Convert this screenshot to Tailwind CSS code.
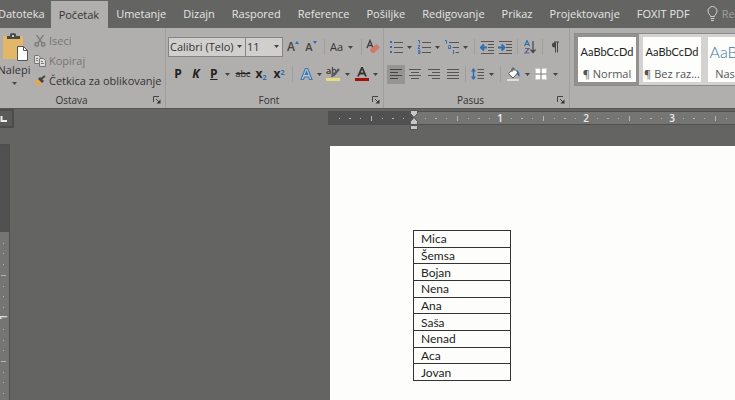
<!DOCTYPE html>
<html lang="sr-Latn">
<head>
  <meta charset="utf-8">
  <meta name="viewport" content="width=device-width, initial-scale=1">
  <title>Dokument</title>
  <script src="https://cdn.jsdelivr.net/npm/@tailwindcss/browser@4"></script>
</head>
<body class="flex flex-col h-screen overflow-hidden bg-[#646462] font-['Open_Sans','Noto_Sans',sans-serif] text-[11px] leading-4 text-[#333]">

  <!-- shared icons -->
  <svg class="hidden">
    <symbol id="arrow" viewBox="0 0 5 3"><path d="M0 0h5L2.500 3z" fill="#444"/></symbol>
    <symbol id="launcher" viewBox="0 0 8 8"><path d="M.5 6V.5H6" fill="none" stroke="#444"/><path d="M3 3l3 3" stroke="#444"/><path d="M7.500 3.500v4h-4z" fill="#333"/></symbol>
  </svg>

  <!-- tabs -->
  <nav class="flex shrink-0 h-7 overflow-hidden whitespace-nowrap text-[#e6e6e6] [&>a]:shrink-0 [&>a]:pl-2 [&>a]:pt-[6px]">
    <a href="#" class="-ml-[10px] pr-[6px]">Datoteka</a>
    <a href="#" class="bg-[#b1afae] text-[#333] mt-px pr-[9px]">Početak</a>
    <a href="#" class="pr-[9px]">Umetanje</a>
    <a href="#" class="pr-[9px]">Dizajn</a>
    <a href="#" class="pr-[9px]">Raspored</a>
    <a href="#" class="pr-[9px]">Reference</a>
    <a href="#" class="pr-[9px]">Pošiljke</a>
    <a href="#" class="pr-[9px]">Redigovanje</a>
    <a href="#" class="pr-[9px]">Prikaz</a>
    <a href="#" class="pr-[9px]">Projektovanje</a>
    <a href="#" class="pr-[9px]">FOXIT PDF</a>
    <a href="#" class="flex gap-1 text-[#a0a09e]">
      <svg class="w-[11px] h-4" viewBox="0 0 11 16" fill="none" stroke="#d0d0ce"><path d="M3.500 10.500c0-2-2.500-2.500-2.500-5.500a4.500 4.500 0 0 1 9 0c0 3-2.500 3.500-2.500 5.500zM3.500 12.500h4M4 14.500h3"/></svg>
      Reci mi
    </a>
  </nav>

  <!-- ribbon -->
  <header class="flex shrink-0 h-[81px] bg-[#b1afae] border-b border-[#555]">

    <section class="flex flex-col w-[166px] shrink-0 border-r border-[#a09e9d] whitespace-nowrap">
      <div class="flex h-[65px]">
        <button class="flex flex-col items-center w-[30px] shrink-0 pt-[5px] -ml-px">
          <svg class="w-7 h-7 shrink-0" viewBox="0 0 28 28">
            <path d="M3 3h20v23H3z" fill="#e3b768"/>
            <path d="M7 6V3h3V1.500Q10 0 13 0t3 1.500V3h4v3z" fill="#4a4a4a"/><path d="M12 2h2v2h-2z" fill="#c8c6c5"/>
            <path d="M17.500 13.500h6l4 4v10h-10z" fill="#fff" stroke="#555"/><path d="M23.500 13.500v4h4" fill="none" stroke="#555"/>
          </svg>
          <span class="mt-px">Nalepi</span>
          <svg class="w-[5px] h-[3px] mt-1"><use href="#arrow"/></svg>
        </button>
        <div class="flex flex-col pt-[3px] pl-[5px] [&>button]:flex [&>button]:items-center [&>button]:gap-[3px] [&>button]:h-5">
          <button class="text-[#757575]">
            <svg class="w-3 h-3" viewBox="0 0 12 12" fill="none" stroke="#777" stroke-width="1.300"><path d="M2.500 0l5.500 8M9.500 0L4 8"/><circle cx="2.800" cy="9.500" r="1.800"/><circle cx="9.200" cy="9.500" r="1.800"/></svg>
            Iseci
          </button>
          <button class="text-[#757575]">
            <svg class="w-3 h-3" viewBox="0 0 12 12" fill="#ddd" stroke="#777"><path d="M.5.5h4l2 2v6h-6z"/><path d="M5.500 3.500h4l2 2v6h-6z"/><path d="M2 3.500h2M2 5.500h2M7 6.500h2M7 8.500h3"/></svg>
            Kopiraj
          </button>
          <button>
            <svg class="w-3 h-3" viewBox="0 0 12 12"><path d="M0 6l4-2 4 4-3 4z" fill="#e3a855"/><path d="M4 4l2-2 4 4-2 2z" fill="#444"/><path d="M7 4l4-3" stroke="#444" stroke-width="2"/></svg>
            Četkica za oblikovanje
          </button>
        </div>
      </div>
      <div class="flex items-center pr-1 text-[10px] leading-4">
        <span class="flex-1 pr-[10px] text-center">Ostava</span>
        <button aria-label="Ostava opcije"><svg class="w-2 h-2"><use href="#launcher"/></svg></button>
      </div>
    </section>

    <section class="flex flex-col w-[218px] shrink-0 border-r border-[#a09e9d] whitespace-nowrap">
      <div class="flex flex-col h-[65px] pl-[2px] pt-[9px] gap-[7px]">
        <div class="flex items-center h-5">
          <label class="relative w-[78px] h-5">
            <select aria-label="Font" class="appearance-none w-full h-full pl-px border border-[#858585] bg-[#d0cfce]"><option>Calibri (Telo)</option></select>
            <svg class="absolute right-1 top-2 w-[5px] h-[3px]"><use href="#arrow"/></svg>
          </label>
          <label class="relative w-[38px] h-5 -ml-px">
            <select aria-label="Veličina fonta" class="appearance-none w-full h-full pl-px border border-[#858585] bg-[#d0cfce]"><option>11</option></select>
            <svg class="absolute right-1 top-2 w-[5px] h-[3px]"><use href="#arrow"/></svg>
          </label>
          <button class="flex justify-center w-[18px] text-xs font-semibold text-[#444] ml-px" aria-label="Povećaj font">A<svg class="w-1 h-[3px] mt-[2px]" viewBox="0 0 4 3"><path d="M0 3h4L2 0z" fill="#2f6db0"/></svg></button>
          <button class="flex justify-center w-[18px] text-[11px] font-semibold text-[#444]" aria-label="Smanji font">A<svg class="w-1 h-[3px] mt-[2px]" viewBox="0 0 4 3"><path d="M0 0h4L2 3z" fill="#2f6db0"/></svg></button>
          <i class="w-px h-4 mx-1 bg-[#a09e9d]"></i>
          <button class="flex items-center gap-[5px] w-7 pl-px">Aa<svg class="w-[5px] h-[3px] shrink-0"><use href="#arrow"/></svg></button>
          <i class="w-px h-4 mx-1 bg-[#a09e9d]"></i>
          <button aria-label="Obriši oblikovanje"><svg class="w-[15px] h-4" viewBox="0 0 15 16"><path d="M1 9L4 1.500 7 9M2 6.500h4" fill="none" stroke="#444" stroke-width="1.400"/><path d="M4 10.500l6.500-5.500 3.500 3.500-6 5.500H6l-2-2z" fill="#d0796b"/></svg></button>
        </div>
        <div class="flex items-center h-5 pl-px text-xs text-[#222]">
          <button class="w-[18px] font-bold">P</button>
          <button class="w-[18px] font-bold italic">K</button>
          <button class="flex items-center gap-[7px] w-[29px] pl-[5px]"><b class="underline">P</b><svg class="w-[5px] h-[3px]"><use href="#arrow"/></svg></button>
          <button class="w-[18px] text-[9px] line-through">abc</button>
          <button class="w-[18px] font-bold">x<sub class="text-[7px] text-[#2f6db0]">2</sub></button>
          <button class="w-[18px] font-bold">x<sup class="text-[7px] text-[#2f6db0]">2</sup></button>
          <i class="w-px h-4 mx-1 bg-[#a09e9d]"></i>
          <button class="flex items-center gap-1 w-7 pl-[3px]" aria-label="Efekti teksta">
            <svg class="w-[13px] h-[14px]" viewBox="0 0 13 14"><path d="M1 12.500L5.300 1.500h2.400L12 12.500H9.500L8.500 10h-4l-1 2.500zM5.300 7.500h2.400L6.500 4.500z" fill="#b9c6d3" stroke="#3f78b3" stroke-width="1.100"/></svg>
            <svg class="w-[5px] h-[3px]"><use href="#arrow"/></svg>
          </button>
          <button class="flex items-center gap-1 w-7" aria-label="Boja isticanja">
            <svg class="w-4 h-[14px]" viewBox="0 0 16 14"><text x="1" y="7" font-size="9" font-weight="600" fill="#333">ab</text><path d="M14 2L9 8" stroke="#555" stroke-width="2"/><path d="M6 10l1-4 3 3z" fill="#555"/><path d="M1 11h14v3H1z" fill="#ecdb7c"/></svg>
            <svg class="w-[5px] h-[3px]"><use href="#arrow"/></svg>
          </button>
          <button class="flex items-center gap-1 w-7 pl-[2px]" aria-label="Boja fonta">
            <svg class="w-[14px] h-[14px]" viewBox="0 0 14 14"><path d="M3 9.500L7 .5l4 9M4.500 6.500h5" fill="none" stroke="#333" stroke-width="1.800"/><path d="M0 11h14v3H0z" fill="#a31208"/></svg>
            <svg class="w-[5px] h-[3px]"><use href="#arrow"/></svg>
          </button>
        </div>
      </div>
      <div class="flex items-center pr-[3px] text-[10px] leading-4">
        <span class="flex-1 text-center">Font</span>
        <button aria-label="Font opcije"><svg class="w-2 h-2"><use href="#launcher"/></svg></button>
      </div>
    </section>

    <section class="flex flex-col w-[186px] shrink-0 border-r border-[#a09e9d] whitespace-nowrap">
      <div class="flex flex-col h-[65px] pl-[3px] pt-[9px] gap-[7px]">
        <div class="flex items-center h-5">
          <button class="flex items-center gap-1 w-7 pl-[2px]" aria-label="Znakovi za nabrajanje">
            <svg class="w-[14px] h-[14px]" viewBox="0 0 14 14"><path d="M1 1h2v2H1zM1 6h2v2H1zM1 11h2v2H1z" fill="#2f6db0"/><path d="M5 2.500h9M5 7.500h9M5 12.500h9" stroke="#555"/></svg>
            <svg class="w-[5px] h-[3px]"><use href="#arrow"/></svg>
          </button>
          <button class="flex items-center gap-1 w-7 pl-[2px]" aria-label="Numerisanje">
            <svg class="w-[14px] h-[14px]" viewBox="0 0 14 14"><path d="M1 .5h1.500v3M1 5.500h2l-2 3h2M1 10.500h2v3H1M1 12h2" fill="none" stroke="#2f6db0"/><path d="M5 2.500h9M5 7.500h9M5 12.500h9" stroke="#555"/></svg>
            <svg class="w-[5px] h-[3px]"><use href="#arrow"/></svg>
          </button>
          <button class="flex items-center gap-1 w-7 pl-[2px]" aria-label="Lista na više nivoa">
            <svg class="w-[14px] h-[14px]" viewBox="0 0 14 14"><path d="M0 .5h1.500v3M3.500 5.500h2v3h-2v-2M8.500 10v4" fill="none" stroke="#2f6db0"/><path d="M4 2.500h10M7.500 7.500H14M10.500 12.500H14" stroke="#555"/></svg>
            <svg class="w-[5px] h-[3px]"><use href="#arrow"/></svg>
          </button>
          <i class="w-px h-4 mx-[3px] bg-[#a09e9d]"></i>
          <button class="flex justify-center w-[18px]" aria-label="Smanji uvlačenje"><svg class="w-[14px] h-[13px]" viewBox="0 0 14 13"><path d="M1 .5h13M8 3.500h6M8 6.500h6M8 9.500h6M1 12.500h13" stroke="#555"/><path d="M7 6.500H2M4 3.500l-3 3 3 3" fill="none" stroke="#2f6db0" stroke-width="2"/></svg></button>
          <button class="flex justify-center w-[18px]" aria-label="Povećaj uvlačenje"><svg class="w-[14px] h-[13px]" viewBox="0 0 14 13"><path d="M1 .5h13M8 3.500h6M8 6.500h6M8 9.500h6M1 12.500h13" stroke="#555"/><path d="M0 6.500h5M3.500 3.500l3 3-3 3" fill="none" stroke="#2f6db0" stroke-width="2"/></svg></button>
          <i class="w-px h-4 mx-[3px] bg-[#a09e9d]"></i>
          <button class="flex justify-center w-[18px]" aria-label="Sortiraj"><svg class="w-3 h-[14px]" viewBox="0 0 12 14" fill="none"><path d="M.5 6L3 .5 5.500 6M1.500 4.500h3" stroke="#2f6db0" stroke-width="1.200"/><path d="M1 8.500h4l-4 4.500h4.500" stroke="#6b5b95" stroke-width="1.200"/><path d="M9 1v11M6.500 9.500L9 12.500l2.500-3" stroke="#444" stroke-width="1.200"/></svg></button>
          <i class="w-px h-4 mx-[3px] bg-[#a09e9d]"></i>
          <button class="flex justify-center w-[18px]" aria-label="Prikaži znakove"><svg class="w-2 h-3" viewBox="0 0 8 12"><path d="M4 1.500H3.500a2.500 2.500 0 0 0 0 5H4z" fill="#444"/><path d="M3 1h5M4.500 1v10.500M6.500 1v10.500" stroke="#444"/></svg></button>
        </div>
        <div class="flex items-center h-5">
          <div class="flex gap-px [&>button]:flex [&>button]:justify-center [&>button]:items-center [&>button]:w-[18px] [&>button]:h-[19px]">
            <button class="bg-[#979594]" aria-label="Poravnaj levo"><svg class="w-3 h-[10px]" viewBox="0 0 12 10" stroke="#444"><path d="M0 .5h12M0 3.500h8M0 6.500h12M0 9.500h8"/></svg></button>
            <button aria-label="Centriraj"><svg class="w-3 h-[10px]" viewBox="0 0 12 10" stroke="#555"><path d="M0 .5h12M2 3.500h8M0 6.500h12M2 9.500h8"/></svg></button>
            <button aria-label="Poravnaj desno"><svg class="w-3 h-[10px]" viewBox="0 0 12 10" stroke="#555"><path d="M0 .5h12M4 3.500h8M0 6.500h12M4 9.500h8"/></svg></button>
            <button aria-label="Obostrano"><svg class="w-3 h-[10px]" viewBox="0 0 12 10" stroke="#555"><path d="M0 .5h12M0 3.500h12M0 6.500h12M0 9.500h12"/></svg></button>
          </div>
          <i class="w-px h-4 mx-[3px] bg-[#a09e9d]"></i>
          <button class="flex items-center gap-1 w-7 pl-[2px]" aria-label="Prored">
            <svg class="w-[14px] h-[14px]" viewBox="0 0 14 14"><path d="M2.500 2v10" stroke="#2f6db0" stroke-width="1.500"/><path d="M0 4.500L2.500 1 5 4.500zM0 9.500L2.500 13 5 9.500z" fill="#2f6db0"/><path d="M6.500 2.500H13M6.500 5.500H13M6.500 8.500H13M6.500 11.500H13" stroke="#555"/></svg>
            <svg class="w-[5px] h-[3px]"><use href="#arrow"/></svg>
          </button>
          <i class="w-px h-4 mx-[3px] bg-[#a09e9d]"></i>
          <button class="flex items-center gap-[5px] w-7 pl-[2px]" aria-label="Senčenje">
            <svg class="w-[14px] h-[14px]" viewBox="0 0 14 14"><path d="M2.500 6.500L8 1.500l4 4-5 5.500z" fill="#fff" stroke="#555"/><path d="M6 5V1.500q1-1.500 2 0V4" fill="none" stroke="#555"/><path d="M11 3q3 2 2.500 7L11 7z" fill="#2f6db0"/><path d="M1 12h12v2H1z" fill="#dedddc"/></svg>
            <svg class="w-[5px] h-[3px]"><use href="#arrow"/></svg>
          </button>
          <button class="flex items-center gap-[6px] w-7 pl-[3px]" aria-label="Ivice">
            <svg class="w-3 h-3" viewBox="0 0 12 12"><path d="M0 0h12v12H0z" fill="#fff"/><path d="M6 0v12M0 6h12" stroke="#777"/><path d="M.5.5h11v11H.5z" fill="none" stroke="#999" stroke-dasharray="1 1"/></svg>
            <svg class="w-[5px] h-[3px]"><use href="#arrow"/></svg>
          </button>
        </div>
      </div>
      <div class="flex items-center pr-1 text-[10px] leading-4">
        <span class="flex-1 text-center">Pasus</span>
        <button aria-label="Pasus opcije"><svg class="w-2 h-2"><use href="#launcher"/></svg></button>
      </div>
    </section>

    <section class="flex-1 min-w-0 pl-1 pt-[5px] overflow-hidden">
      <div class="flex gap-px h-[53px] border border-r-0 border-[#8c8b8a] bg-[#d3d2d0] whitespace-nowrap [&>button]:flex [&>button]:flex-col [&>button]:items-center [&>button]:justify-between [&>button]:shrink-0 [&>button]:w-16 [&>button]:pt-[7px] [&>button]:border-[3px] [&>button]:bg-[#fdfefc] [&>button]:bg-clip-padding">
        <button class="border-[#929190]"><span class="font-[Lato] text-[11px] text-[#222]">AaBbCcDd</span><span class="text-[#555]">¶ Normal</span></button>
        <button class="border-transparent"><span class="font-[Lato] text-[11px] text-[#222]">AaBbCcDd</span><span class="text-[#555]">¶ Bez raz...</span></button>
        <button class="border-transparent"><span class="font-[Lato] font-light text-base leading-4 text-[#41759f]">AaBbCc</span><span class="text-[#555]">Naslov 1</span></button>
      </div>
    </section>
  </header>

  <!-- horizontal ruler -->
  <div class="flex shrink-0 h-[21px]">
    <div class="flex items-center w-[14px] h-[19px] border-2 border-l-0 border-[#4c4c4b] bg-[#5b5b5a]"><svg class="w-[7px] h-[6px]" viewBox="0 0 7 6"><path d="M1.500 0v5H7" fill="none" stroke="#eee" stroke-width="2"/></svg></div>
    <div class="w-[314px] shrink-0"></div>
    <svg class="flex-1 min-w-0 h-[21px]">
      <defs>
        <pattern id="ticks" x="86" width="86" height="15" y="2" patternUnits="userSpaceOnUse">
          <path d="M11 7.500h1M21 7.500h2M32 7.500h1M54 7.500h1M64 7.500h2M75 7.500h1M43.500 5v5" stroke="#b5b5b4"/>
        </pattern>
      </defs>
      <rect y="2" width="86" height="14" fill="#515151"/>
      <rect x="86" y="2" width="100%" height="14" fill="#757574"/>
      <rect y="2" width="100%" height="15" fill="url(#ticks)"/>
      <path d="M0 2.500h4000M0 15.500h4000" stroke="#505050"/>
      <g fill="#eee" font-size="10" font-weight="600" text-anchor="middle"><text x="172" y="13">1</text><text x="258" y="13">2</text><text x="344" y="13">3</text></g>
      <path d="M82.500 1.500h7v3L86 8.500l-3.500-4zM82.500 15.500v-3L86 8.500l3.500 4v3zM82.500 16.500h7v4h-7z" fill="#c6c6c5" stroke="#555"/>
    </svg>
  </div>

  <main class="flex flex-1 min-h-0">
    <!-- vertical ruler -->
    <svg class="w-[10px] shrink-0 h-full mt-[14px]">
      <rect width="9" height="88" fill="#515151"/>
      <rect y="88" width="9" height="100%" fill="#757574"/>
      <path d="M3 99.500h1M3 109.500h1M3 120.500h1M1 131.500h5M3 142.500h1M3 152.500h1M3 163.500h1M3 185.500h1M3 196.500h1M3 206.500h1M1 217.500h5M3 228.500h1M3 238.500h1M3 249.500h1" stroke="#b5b5b4"/>
      <text transform="translate(7 176) rotate(-90)" font-size="10" font-weight="600" fill="#eee">1</text>
      <path d="M9.500 0v4000M0 .5h9" stroke="#4f4f50"/>
    </svg>

    <article class="flex-1 ml-[320px] mt-4 pl-[83px] pt-[84px] bg-[#fdfefc]">
      <table class="w-[98px] h-[151px] border-collapse font-[Lato] text-xs leading-[15px] text-[#222] [&_td]:border [&_td]:border-[#333] [&_td]:py-0 [&_td]:px-[7px]">
        <tr><td>Mica</td></tr>
        <tr><td>Šemsa</td></tr>
        <tr><td>Bojan</td></tr>
        <tr><td>Nena</td></tr>
        <tr><td>Ana</td></tr>
        <tr><td>Saša</td></tr>
        <tr><td>Nenad</td></tr>
        <tr><td>Aca</td></tr>
        <tr><td>Jovan</td></tr>
      </table>
    </article>
  </main>
</body>
</html>
